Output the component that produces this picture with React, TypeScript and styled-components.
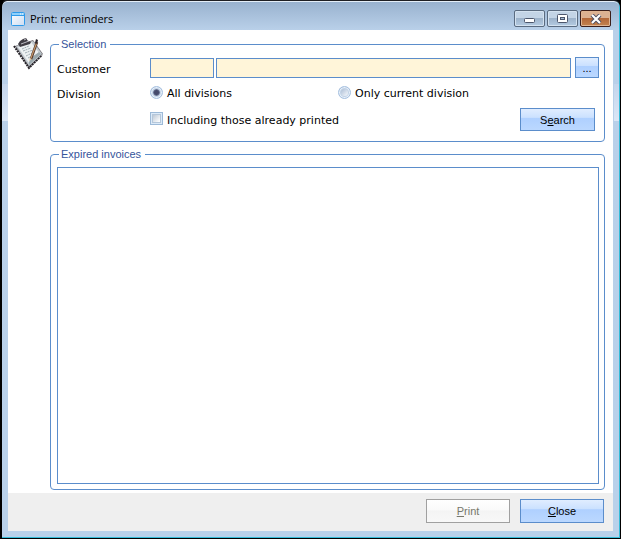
import React from "react";
import styled, { createGlobalStyle, css } from "styled-components";

const LINE = "#5b8dcb";
const UI = `"Liberation Sans", Arial, sans-serif`;
const WIDE = `"DejaVu Sans", Verdana, sans-serif`;

const GlobalStyle = createGlobalStyle`
  *, *::before, *::after { box-sizing: border-box; }
  body { margin: 0; background: #000; }
`;

const Window = styled.div`
  display: flex;
  flex-direction: column;
  min-height: 100vh;
  padding: 0 7px 7px 6px;
  border: 1px solid #000;
  border-top-color: #1f1f24;
  border-left: 2px solid #000;
  border-radius: 7px 7px 0 0;
  color: #000;
  background:
    linear-gradient(#c4d5ec, #dbe7f6) 0 83px / 6px 37px no-repeat,
    linear-gradient(#c4d5ec, #dbe7f6) 100% 83px / 6px 37px no-repeat,
    linear-gradient(#98b1ce 0, #b9d0e9 29px, #b9d1ea 100%);
  box-shadow: inset -1px -1px 0 #35bcd8, inset 0 1px 0 #e4eef8;
`;

const TitleBar = styled.header`
  display: flex;
  align-items: center;
  gap: 5px;
  height: 29px;
  padding: 6px 2px 0 3px;
`;

const Title = styled.h1`
  flex: 1;
  margin: 0;
  font: 400 11px/16px "Open Sans", "Segoe UI", sans-serif;
`;

const Captions = styled.div`
  display: flex;
  gap: 2px;
`;

const Caption = styled.button<{ $close?: boolean }>`
  display: flex;
  align-items: center;
  justify-content: center;
  width: 31px;
  height: 17px;
  padding: 0;
  border: 1px solid #5a6b80;
  border-radius: 2px;
  background: linear-gradient(#c3d4e6 0 45%, #9db3cb 50%, #b4cbe2);
  box-shadow: inset 0 0 0 1px #d4e2f0;
  ${(p) =>
    p.$close &&
    css`
      border-color: #3b1e1a;
      background: linear-gradient(#dbb192 0 45%, #b3683a 50%, #c48450);
      box-shadow: inset 0 0 0 1px #dfb593;
    `}
`;

const Client = styled.main`
  display: flex;
  flex: 1;
  padding: 8px 8px 3px 5px;
  gap: 7px;
  background: #fff;
`;

const Panels = styled.div`
  display: flex;
  flex: 1;
  flex-direction: column;
  gap: 6px;
  min-width: 0;
`;

const Group = styled.fieldset<{ $grow?: boolean }>`
  display: flex;
  flex-direction: column;
  flex: ${(p) => (p.$grow ? "1" : "none")};
  min-width: 0;
  margin: 0;
  padding: ${(p) => (p.$grow ? "6px 5px 5px 6px" : "6px 5px 10px 6px")};
  border: 1px solid ${LINE};
  border-radius: 4px;
`;

const Legend = styled.legend`
  margin-left: 2px;
  padding: 0 4px 0 2px;
  color: #35549b;
  font: 11px/13px ${UI};
`;

const Form = styled.form`
  display: grid;
  grid-template-columns: 93px 1fr;
  grid-template-rows: 21px 16px 23px;
  row-gap: 7px;
  font: 11px/15px ${WIDE};
`;

const FieldLabel = styled.label`
  align-self: center;
  padding-top: 3px;
`;

const FieldRow = styled.div`
  display: flex;
  align-items: center;
`;

const TextBox = styled.input<{ $short?: boolean }>`
  flex: ${(p) => (p.$short ? "0 0 64px" : "1")};
  min-width: 0;
  height: 20px;
  margin: 1px 0 0 ${(p) => (p.$short ? "0" : "2px")};
  padding: 0 3px;
  border: 1px solid ${LINE};
  background: #fff5d9;
  font: inherit;
`;

const Button = styled.button<{ $size?: "browse" | "small" }>`
  width: ${(p) => (p.$size === "browse" ? "24px" : p.$size === "small" ? "75px" : "84px")};
  height: ${(p) => (p.$size === "browse" ? "21px" : p.$size === "small" ? "23px" : "24px")};
  padding: 0;
  border: 1px solid ${LINE};
  background: linear-gradient(#e0edff, #cbe1ff 40%, #afd0ff 44%, #bbd8ff);
  color: #000;
  font: 11px/14px ${UI};
  &:disabled {
    border-color: #a0a0a0;
    background: linear-gradient(#fff, #fafafa 45%, #f4f4f4 50%, #f8f8f8);
    color: #77776a;
  }
`;

const BrowseButton = styled(Button)`
  margin-left: 4px;
`;

const Choices = styled.div`
  display: grid;
  grid-template-columns: 188px 1fr;
  align-items: center;
`;

const Choice = styled.label`
  display: flex;
  align-items: center;
  gap: 4px;
  white-space: nowrap;
`;

const ChoiceText = styled.span`
  padding-top: 1px;
`;

const Radio = styled.input`
  appearance: none;
  flex: none;
  width: 13px;
  height: 13px;
  margin: 0 0 1px;
  border: 1px solid #a4bfdf;
  border-radius: 50%;
  background: linear-gradient(135deg, #a9bbd3 15%, #eef3f9 75%);
  box-shadow: inset 0 0 0 1px #e9f1fa, inset 0 0 0 2px #c1d2e6;
  &:checked {
    background: radial-gradient(circle, #454a6b 0 2px, #6c7594 3px, #c6d4e6 4px);
  }
`;

const Check = styled.input`
  appearance: none;
  flex: none;
  width: 13px;
  height: 13px;
  margin: 0 0 2px;
  border: 1px solid #9dbad8;
  background: linear-gradient(135deg, #b9c5d3 15%, #fbfcfd 75%);
  box-shadow: inset 0 0 0 1px #dceaf8, inset 0 0 0 2px #b5c7da;
`;

const SearchRow = styled.div`
  display: flex;
  align-items: center;
  justify-content: space-between;
  grid-column: 2;
  padding-right: 4px;
`;

const ResultList = styled.div`
  flex: 1;
  border: 1px solid ${LINE};
  background: #fff;
`;

const Footer = styled.footer`
  display: flex;
  justify-content: flex-end;
  gap: 10px;
  height: 38px;
  padding: 6px 9px 0 0;
  background: #efefef;
`;

const Icon = styled.svg`
  display: block;
  flex: none;
`;

const WindowIcon = () => (
  <Icon width="14" height="14" viewBox="0 0 14 14" aria-hidden="true">
    <defs>
      <linearGradient id="pane" x1="0" y1="0" x2="1" y2="1">
        <stop offset="0" stopColor="#fff" />
        <stop offset="1" stopColor="#ccdcf2" />
      </linearGradient>
    </defs>
    <rect x=".5" y=".5" width="13" height="13" rx="1" fill="url(#pane)" stroke="#2f9ae9" />
    <path d="M1 1h12v2H1z" fill="#8fd0fb" />
    <path d="M1 3.5h12" stroke="#2f9ae9" />
    <path d="M9 2h1M11 2h1" stroke="#fff" />
  </Icon>
);

const ClipboardIcon = () => (
  <Icon width="30" height="32" viewBox="0 0 30 32" aria-hidden="true">
    <path d="m2 8 18-6 10 14-14 14z" fill="#77747a" />
    <path d="m1 8 15 22 13-13" fill="none" stroke="#252228" strokeWidth="2" strokeDasharray="2 .8" />
    <path d="m3 8 17-5 9 13-13 12z" fill="#c5ccd1" />
    <path d="m5 9 13-5 8 11-10 10z" fill="#edf1f2" />
    <path d="m16 27 12-11-2-2-7 5-3 5z" fill="#9ba9ad" />
    <path d="m9 11 7-3M10 13l8-3M12 15l8-3M13 18l6-3M15 20l4-2" stroke="#a0adb3" strokeDasharray="2 .7" />
    <path d="m5 6 2-3 3-2 3-1 2 3 3 1-1 2-10 3z" fill="#403d44" />
    <path d="m8 6 8-3M11 2l2-1" stroke="#bcbcc3" />
    <path d="M24 4 18 21" stroke="#4c3228" strokeWidth="2.5" />
    <path d="m24 4-6 16" stroke="#c99a6a" strokeWidth="1.200" />
    <path d="m23 1 2 1-1 4-2-1z" fill="#28242b" />
    <path d="m17 20 2 1-3 2z" fill="#e4c49a" />
  </Icon>
);

const MinimizeGlyph = () => (
  <Icon width="13" height="11" viewBox="0 0 13 11" aria-hidden="true">
    <rect x="1.5" y="5.5" width="10" height="4" rx="1" fill="#fff" stroke="#4c566c" />
  </Icon>
);

const MaximizeGlyph = () => (
  <Icon width="11" height="9" viewBox="0 0 11 9" aria-hidden="true">
    <rect x=".5" y=".5" width="10" height="8" rx="1" fill="#fff" stroke="#4c566c" />
    <rect x="3.5" y="3.5" width="4" height="2" fill="#a7bcd4" stroke="#4c566c" />
  </Icon>
);

const CloseGlyph = () => (
  <Icon width="12" height="10" viewBox="0 0 12 10" aria-hidden="true">
    <path d="m2 1 8 8M10 1 2 9" stroke="#4b4c5e" strokeWidth="4" />
    <path d="m2 1 8 8M10 1 2 9" stroke="#fff" strokeWidth="2.200" />
  </Icon>
);

export default function App() {
  return (
    <>
      <GlobalStyle />
      <Window>
        <TitleBar>
          <WindowIcon />
          <Title>Print: reminders</Title>
          <Captions>
            <Caption type="button" aria-label="Minimize"><MinimizeGlyph /></Caption>
            <Caption type="button" aria-label="Maximize"><MaximizeGlyph /></Caption>
            <Caption type="button" aria-label="Close window" $close><CloseGlyph /></Caption>
          </Captions>
        </TitleBar>
        <Client>
          <ClipboardIcon />
          <Panels>
            <Group>
              <Legend>Selection</Legend>
              <Form onSubmit={(e) => e.preventDefault()}>
                <FieldLabel htmlFor="customer">Customer</FieldLabel>
                <FieldRow>
                  <TextBox id="customer" $short />
                  <TextBox aria-label="Customer name" />
                  <BrowseButton type="button" $size="browse">...</BrowseButton>
                </FieldRow>
                <FieldLabel as="span" id="division">Division</FieldLabel>
                <Choices role="radiogroup" aria-labelledby="division">
                  <Choice>
                    <Radio type="radio" name="division" defaultChecked />
                    <ChoiceText>All divisions</ChoiceText>
                  </Choice>
                  <Choice>
                    <Radio type="radio" name="division" />
                    <ChoiceText>Only current division</ChoiceText>
                  </Choice>
                </Choices>
                <SearchRow>
                  <Choice>
                    <Check type="checkbox" />
                    <ChoiceText>Including those already printed</ChoiceText>
                  </Choice>
                  <Button type="submit" $size="small">S<u>e</u>arch</Button>
                </SearchRow>
              </Form>
            </Group>
            <Group $grow>
              <Legend>Expired invoices</Legend>
              <ResultList />
            </Group>
          </Panels>
        </Client>
        <Footer>
          <Button type="button" disabled><u>P</u>rint</Button>
          <Button type="button"><u>C</u>lose</Button>
        </Footer>
      </Window>
    </>
  );
}
